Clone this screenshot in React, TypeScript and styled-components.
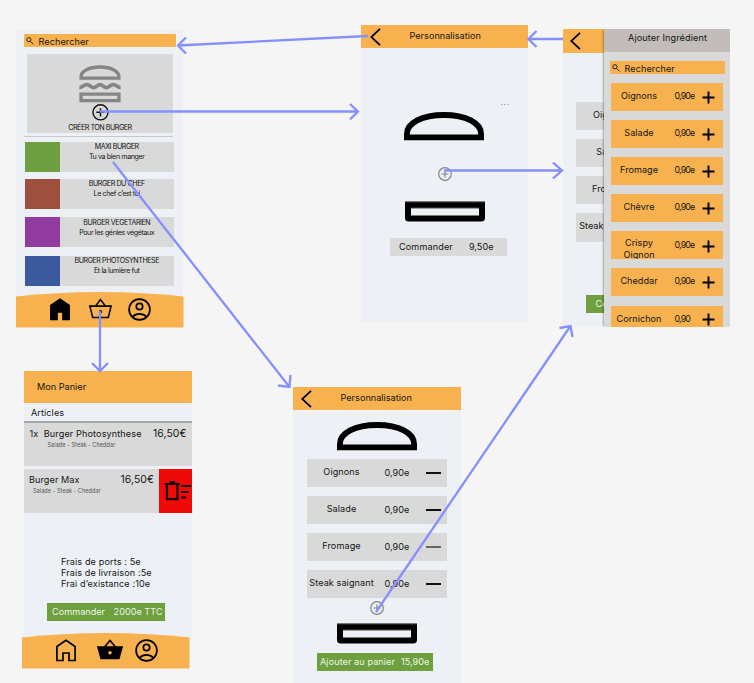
import React from "react";
import styled, { createGlobalStyle } from "styled-components";

const ORANGE = "#f7b24f";
const GREEN = "#6ea03f";
const GREY = "#d9d9d9";
const LINK = "#8490ff";

const GlobalStyle = createGlobalStyle`
  * { box-sizing: border-box; }
  body { margin: 0; background: #f5f5f5; }
`;

const Canvas = styled.main`
  position: relative;
  width: 754px;
  height: 683px;
  overflow: hidden;
  background: #f5f5f5;
  font-family: Inter, "Liberation Sans", sans-serif;
  color: #151515;
`;

/* Each screen is a node placed freely on the board. */
const Frame = styled.section<{ $x: number; $y: number; $w: number; $h: number }>`
  position: absolute;
  left: ${(p) => p.$x}px;
  top: ${(p) => p.$y}px;
  width: ${(p) => p.$w}px;
  height: ${(p) => p.$h}px;
  display: flex;
  flex-direction: column;
  background: #edf1f5;
`;

const Label = styled.span<{ $size?: number; $track?: number; $color?: string }>`
  font-size: ${(p) => p.$size ?? 9.1}px;
  letter-spacing: ${(p) => p.$track ?? 0.03}px;
  color: ${(p) => p.$color ?? "inherit"};
  line-height: 12px;
  white-space: pre;
`;

const SearchBar = styled.div<{ $w: number }>`
  width: ${(p) => p.$w}px;
  height: 13px;
  flex: none;
  display: flex;
  align-items: center;
  gap: 4.5px;
  padding: 2px 0 0 2.5px;
  border-radius: 1px;
  background: ${ORANGE};

  svg { margin-top: -2px; }
`;

const SearchIcon = () => (
  <svg width="8" height="8" viewBox="0 0 8 8" fill="none" stroke="#222" strokeWidth="1">
    <circle cx="2.9" cy="2.7" r="2.1" />
    <path d="M4.4 4.3 7.4 7.3" />
  </svg>
);

const Search = ({ width }: { width: number }) => (
  <SearchBar $w={width}>
    <SearchIcon />
    <Label $track={0.08}>Rechercher</Label>
  </SearchBar>
);

const Header = styled.header<{ $h: number; $pad?: number }>`
  height: ${(p) => p.$h}px;
  flex: none;
  display: flex;
  align-items: center;
  padding-left: ${(p) => p.$pad ?? 9}px;
  background: ${ORANGE};
`;

const HeaderTitle = styled.div`
  margin: 0 0 1px 28.5px;
  display: flex;
`;

const Chevron = () => (
  <svg width="11" height="18" viewBox="0 0 11 18" fill="none" stroke="#000" strokeWidth="1.8">
    <path d="M10 .8 1.2 9 10 17.2" />
  </svg>
);

const BunTop = () => (
  <svg width="80" height="29" viewBox="0 0 80 29" fill="none" stroke="#000" strokeWidth="5.8">
    <path d="M2.9 25.4V22C2.9 11 18 3 40 3s37.1 8 37.1 19v3.4Z" />
  </svg>
);

const BunBottom = () => (
  <svg width="80" height="21" viewBox="0 0 80 21">
    <path fillRule="evenodd" d="M0 1h80v16q0 3.500-4 3.500H4Q0 20.500 0 17ZM6 7v7.500h68V7Z" />
    <path d="M0 .6h80" stroke="#777" strokeWidth="1.200" />
    <path d="M6 7.200h68" stroke="#777" strokeWidth="1" />
  </svg>
);

const PlusCircle = ({ size, color }: { size: number; color: string }) => (
  <svg width={size} height={size} viewBox="0 0 16 16" fill="none" stroke={color} strokeWidth="1.4">
    <circle cx="8" cy="8" r="7.200" />
    <path d="M8 4v8M4 8h8" />
  </svg>
);

const BurgerIcon = () => (
  <svg width="42" height="39" viewBox="0 0 42 39" fill="none" stroke="#858585" strokeWidth="3.4">
    <path d="M1.700 13.300V12C1.700 6 10 2 21 2s19.300 4 19.300 10v1.300Z" />
    <path strokeWidth="3.8" d="M0 23c3 0 4-3 7.500-3s4 3 7 3 3.500-3 6.500-3 3.500 3 6.500 3 3.500-3 7-3 4.500 3 7.500 3" />
    <path d="M1.700 29.700h38.600V36.300h-38.600Z" />
  </svg>
);

const Creator = styled.div`
  width: 146px;
  height: 79px;
  margin: 7px 0 0 11px;
  padding-top: 11px;
  flex: none;
  display: flex;
  flex-direction: column;
  align-items: center;
  background: ${GREY};

  svg + svg { margin-top: 1px; }
  span { margin-top: 1px; line-height: 11px; }
`;

const Divider = styled.hr`
  width: 149px;
  height: 1px;
  flex: none;
  margin: 3px 0 5px 8px;
  border: 0;
  background: #c6c9cc;
`;

const Menu = styled.div`
  display: flex;
  flex-direction: column;
  margin-left: 9px;
`;

const Dish = styled.article<{ $gap: number }>`
  width: 149px;
  height: 30px;
  margin-bottom: ${(p) => p.$gap}px;
  display: grid;
  grid-template-columns: 34.5px 1fr;
  background: ${GREY};
`;

const Swatch = styled.div<{ $color: string }>`
  background: ${(p) => p.$color};
`;

const DishText = styled.div<{ $top: number }>`
  display: flex;
  flex-direction: column;
  align-items: center;
  padding-top: ${(p) => p.$top}px;

  span { line-height: 10px; }
`;

const dishes = [
  { name: "MAXI BURGER", sub: "Tu va bien manger", color: "#6ea03f", top: 0, gap: 7 },
  { name: "BURGER DU CHEF", sub: "Le chef c’est toi", color: "#9f4f3d", top: 0, gap: 8 },
  { name: "BURGER VEGETARIEN", sub: "Pour les génies végétaux", color: "#923b9f", top: 1, gap: 9 },
  { name: "BURGER PHOTOSYNTHESE", sub: "Et la lumière fut", color: "#3b599f", top: 0, gap: 6 },
];

const NavBar = styled.nav`
  position: relative;
  width: 167.5px;
  height: 36px;
  flex: none;
  display: flex;
  overflow: hidden;
`;

const NavShape = styled.svg`
  position: absolute;
  inset: 0;
`;

const NavIcons = styled.div<{ $left: number; $gap1: number; $gap2: number }>`
  position: relative;
  display: flex;
  align-items: center;
  padding: 0 0 1px ${(p) => p.$left}px;

  svg:nth-child(2) { margin: 0 ${(p) => p.$gap2}px 2px ${(p) => p.$gap1}px; }
`;

const HomeIcon = ({ filled }: { filled: boolean }) => (
  <svg width="20" height="23" viewBox="0 0 20 23" fill={filled ? "#000" : "none"} stroke="#000" strokeWidth="1.7">
    <path d="M.9 21.500V7.500L10 1.200 19.100 7.500v14H13v-7.500H7v7.500Z" />
  </svg>
);

const BasketIcon = ({ filled }: { filled: boolean }) => (
  <svg width={filled ? 26 : 23} height="21" viewBox="0 0 26 21" preserveAspectRatio="none" fill="none" stroke="#000" strokeWidth="1.7">
    <path d="M7.500 8 13 1.500 18.500 8" />
    <path fill={filled ? "#000" : "none"} d="M1 8.200h24L21.800 19.500H4.200Z" />
    <circle cx="13" cy="13.800" r="1.800" fill={filled ? ORANGE : "#000"} stroke="none" />
  </svg>
);

const UserIcon = () => (
  <svg width="23" height="23" viewBox="0 0 23 23" fill="none" stroke="#000" strokeWidth="1.700">
    <circle cx="11.500" cy="11.500" r="10.400" />
    <circle cx="11.500" cy="8.500" r="3.200" />
    <path d="M4.500 18.800c2-2 4.500-2.900 7-2.900s5 .9 7 2.900" />
  </svg>
);

const BottomNav = ({ cart }: { cart: boolean }) => (
  <NavBar>
    <NavShape width="168" height="36" viewBox="0 0 168 36">
      <path fill={ORANGE} d="M0 4.500Q40 0 84 0t83.500 4.500V35.500H0Z" />
    </NavShape>
    <NavIcons $left={cart ? 34 : 33.5} $gap1={cart ? 21 : 19} $gap2={cart ? 11.5 : 16}>
      <HomeIcon filled={!cart} />
      <BasketIcon filled={cart} />
      <UserIcon />
    </NavIcons>
  </NavBar>
);

const Spacer = styled.div<{ $h: number }>`
  height: ${(p) => p.$h}px;
  flex: none;
`;

const Centered = styled.div<{ $left: number }>`
  display: flex;
  flex: none;
  padding-left: ${(p) => p.$left}px;
`;

const Button = styled.div<{ $x: number; $w: number; $pad: number; $gap: number; $green?: boolean }>`
  margin-left: ${(p) => p.$x}px;
  width: ${(p) => p.$w}px;
  height: 18px;
  flex: none;
  display: flex;
  align-items: center;
  padding-left: ${(p) => p.$pad}px;
  gap: ${(p) => p.$gap}px;
  overflow: hidden;
  color: ${(p) => (p.$green ? "#eef4e8" : "inherit")};
  background: ${(p) => (p.$green ? GREEN : GREY)};
`;

const Items = styled.div<{ $x: number; $gap: number }>`
  display: flex;
  flex-direction: column;
  flex: none;
  margin-left: ${(p) => p.$x}px;
  gap: ${(p) => p.$gap}px;
`;

const Item = styled.div`
  width: 140px;
  height: 28.300px;
  display: grid;
  grid-template-columns: 70px 8px 41px 1fr;
  align-items: center;
  background: ${GREY};

  span:first-child { justify-self: center; margin-top: -2px; }
  span:nth-child(2) { grid-column: 3; margin-top: -1px; }
`;

const Minus = styled.i<{ $faint: boolean }>`
  width: 15px;
  height: 2px;
  background: ${(p) => (p.$faint ? "#666" : "#111")};
`;

const Drawer = styled.aside`
  position: absolute;
  left: 41px;
  top: 0;
  width: 126px;
  height: 100%;
  overflow: hidden;
  display: flex;
  flex-direction: column;
  background: ${GREY};
`;

const DrawerShade = styled.div`
  position: absolute;
  left: 41px;
  top: 0;
  width: 126px;
  height: 100%;
  box-shadow: -2px 0 1.5px -1px rgba(0, 0, 0, 0.3);
`;

const DrawerHeader = styled.header`
  height: 22.500px;
  flex: none;
  padding: 3px 0 0 24px;
  background: #c2bcbb;
  display: flex;
`;

const Ingredient = styled.div<{ $tall: boolean }>`
  width: 112px;
  height: 28px;
  flex: none;
  display: grid;
  grid-template-columns: 56px 7.500px 27px 1fr;
  align-items: center;
  overflow: hidden;
  background: ${ORANGE};

  span:first-child { justify-self: center; text-align: center; margin-top: ${(p) => (p.$tall ? 6 : -2)}px; }
  span:nth-child(2) { grid-column: 3; margin-top: -2px; }
`;

const PlusIcon = () => (
  <svg width="13" height="13" viewBox="0 0 13 13" stroke="#000" strokeWidth="1.900">
    <path d="M6.500.5v12M.5 6.500h12" />
  </svg>
);

const ingredients = ["Oignons", "Salade", "Fromage", "Chèvre", "Crispy\nOignon", "Cheddar", "Cornichon"];
const chosen = ["Oignons", "Salade", "Fromage", "Steak saignant"];

const Tab = styled.div`
  height: 20px;
  flex: none;
  display: flex;
  align-items: center;
  padding: 3px 0 0 7px;
  border-bottom: 2px solid #a8a8a8;
`;

const CartLine = styled.article<{ $h: number }>`
  height: ${(p) => p.$h}px;
  flex: none;
  display: flex;
  justify-content: space-between;
  background: ${GREY};
`;

const CartText = styled.div<{ $left: number; $indent: number }>`
  display: flex;
  flex-direction: column;
  padding: 5px 0 0 ${(p) => p.$left}px;

  span + span { margin-left: ${(p) => p.$indent}px; line-height: 10px; }
`;

const CartPrice = styled.div<{ $right: number }>`
  margin-left: auto;
  padding: 5px ${(p) => p.$right}px 0 0;
  display: flex;
  align-items: flex-start;
`;

const Delete = styled.div`
  width: 33px;
  height: 100%;
  display: flex;
  align-items: center;
  justify-content: flex-end;
  background: #ef0a08;
`;

const Fees = styled.div`
  display: flex;
  flex-direction: column;
  padding-left: 37px;

  span { line-height: 11.300px; }
`;

const Links = styled.svg`
  position: absolute;
  inset: 0;
`;

export default function App() {
  return (
    <>
      <GlobalStyle />
      <Canvas>
        <Frame $x={16} $y={30} $w={167} $h={297}>
          <Spacer $h={4} />
          <Centered $left={7.5}><Search width={152} /></Centered>
          <Creator>
            <BurgerIcon />
            <PlusCircle size={17} color="#151515" />
            <Label $size={7.2} $track={-0.5}>CRÉER TON BURGER</Label>
          </Creator>
          <Divider />
          <Menu>
            {dishes.map((d) => (
              <Dish key={d.name} $gap={d.gap}>
                <Swatch $color={d.color} />
                <DishText $top={d.top}>
                  <Label $size={7.1} $track={-0.42}>{d.name}</Label>
                  <Label $size={7.1} $track={-0.38}>{d.sub}</Label>
                </DishText>
              </Dish>
            ))}
          </Menu>
          <BottomNav cart={false} />
        </Frame>

        <Frame $x={361} $y={25} $w={167} $h={296.5}>
          <Header $h={23}>
            <Chevron />
            <HeaderTitle><Label>Personnalisation</Label></HeaderTitle>
          </Header>
          <Spacer $h={48} />
          <Centered $left={139.5}><Label $size={8} $track={0.8} $color="#777">...</Label></Centered>
          <Spacer $h={3.5} />
          <Centered $left={43}><BunTop /></Centered>
          <Spacer $h={26} />
          <Centered $left={77}><PlusCircle size={14} color="#858585" /></Centered>
          <Spacer $h={20} />
          <Centered $left={43.5}><BunBottom /></Centered>
          <Spacer $h={16} />
          <Button $x={28.5} $w={117} $pad={9.5} $gap={16}>
            <Label $track={0.12}>Commander</Label>
            <Label>9,50e</Label>
          </Button>
        </Frame>

        <Frame $x={563} $y={29} $w={167} $h={297.5}>
          <Header $h={23.5} $pad={7}><Chevron /></Header>
          <Spacer $h={49.5} />
          <Items $x={13} $gap={8.8}>
            {chosen.map((name) => (
              <Item key={name}><Label>{name}</Label></Item>
            ))}
          </Items>
          <Spacer $h={53.5} />
          <Button $x={23} $w={117} $pad={9.5} $gap={15} $green>
            <Label>Commander</Label>
          </Button>
          <DrawerShade />
          <Drawer>
            <DrawerHeader><Label $track={0.12}>Ajouter Ingrédient</Label></DrawerHeader>
            <Spacer $h={9.5} />
            <Centered $left={5.5}><Search width={115.5} /></Centered>
            <Spacer $h={9} />
            <Items $x={7} $gap={9.1}>
              {ingredients.map((name) => (
                <Ingredient key={name} $tall={name.includes("\n")}>
                  <Label>{name}</Label>
                  <Label $size={8.8} $track={-0.8}>{name === "Cornichon" ? "0,90" : "0,90e"}</Label>
                  <PlusIcon />
                </Ingredient>
              ))}
            </Items>
          </Drawer>
        </Frame>

        <Frame $x={24} $y={371} $w={168} $h={270}>
          <Header $h={31.5} $pad={13}><Label>Mon Panier</Label></Header>
          <Tab><Label $track={0.08}>Articles</Label></Tab>
          <CartLine $h={43.5}>
            <CartText $left={5.5} $indent={18}>
              <Label $track={0.12}>1x  Burger Photosynthese</Label>
              <Label $size={5.5} $track={0.08} $color="#555">Salade - Steak - Cheddar</Label>
            </CartText>
            <CartPrice $right={5.5}><Label $size={10.4} $track={0.1}>16,50€</Label></CartPrice>
          </CartLine>
          <Spacer $h={3} />
          <CartLine $h={44}>
            <CartText $left={5} $indent={4}>
              <Label $track={0.08}>Burger Max</Label>
              <Label $size={5.5} $track={0.08} $color="#555">Salade - Steak - Cheddar</Label>
            </CartText>
            <CartPrice $right={5}><Label $size={10.4} $track={0.1}>16,50€</Label></CartPrice>
            <Delete>
              <svg width="28" height="22" viewBox="0 0 28 22" fill="none" stroke="#160000" strokeWidth="2.200">
                <path d="M.5 4h15.500M5.500 2.200h5.500M3 4v15.200h10.500V4M17 6h10M17 12h8M17 17.500h5" />
              </svg>
            </Delete>
          </CartLine>
          <Spacer $h={42.5} />
          <Fees>
            <Label $track={0.12}>Frais de ports : 5e</Label>
            <Label $track={0.1}>Frais de livraison :5e</Label>
            <Label $track={0.12}>Frai d’existance :10e</Label>
          </Fees>
          <Spacer $h={13.5} />
          <Button $x={23} $w={117.5} $pad={5} $gap={8.5} $green>
            <Label>Commander</Label>
            <Label>2000e TTC</Label>
          </Button>
        </Frame>
        <Frame as="div" $x={22} $y={633} $w={168} $h={35.5}>
          <BottomNav cart />
        </Frame>

        <Frame $x={293} $y={387} $w={167.5} $h={296}>
          <Header $h={23} $pad={8}>
            <Chevron />
            <HeaderTitle><Label>Personnalisation</Label></HeaderTitle>
          </Header>
          <Spacer $h={11.5} />
          <Centered $left={44}><BunTop /></Centered>
          <Spacer $h={8.5} />
          <Items $x={13.5} $gap={8.7}>
            {chosen.map((name) => (
              <Item key={name}>
                <Label $track={0.08}>{name}</Label>
                <Label>0,90e</Label>
                <Minus $faint={name === "Fromage"} />
              </Item>
            ))}
          </Items>
          <Spacer $h={3} />
          <Centered $left={76.5}><PlusCircle size={14} color="#858585" /></Centered>
          <Spacer $h={8} />
          <Centered $left={44}><BunBottom /></Centered>
          <Spacer $h={9} />
          <Button $x={23.5} $w={116.5} $pad={3.5} $gap={6} $green>
            <Label $track={0.08}>Ajouter au panier</Label>
            <Label>15,90e</Label>
          </Button>
        </Frame>

        <Links width="754" height="683" viewBox="0 0 754 683" fill="none" stroke={LINK} strokeWidth="2.300">
          <path d="M368 36 178 45.500M186 37.500 178 45.500 186 53.500" />
          <path d="M100 111.500H358M350 104 358 111.500 350 119.500" />
          <path d="M444 170.500H562M553 162.500 562 170.500 553 178.500" />
          <path d="M563 39H529M536.500 31 528.500 39 536.500 47" />
          <path d="M113 162 289.500 387M278 385.500 289.500 387 290.500 375" />
          <path d="M376 612 570.500 326M559.500 328 570.500 326 572.500 337" />
          <path d="M100 311V371M92 363 100 371 108 363" />
        </Links>
      </Canvas>
    </>
  );
}
